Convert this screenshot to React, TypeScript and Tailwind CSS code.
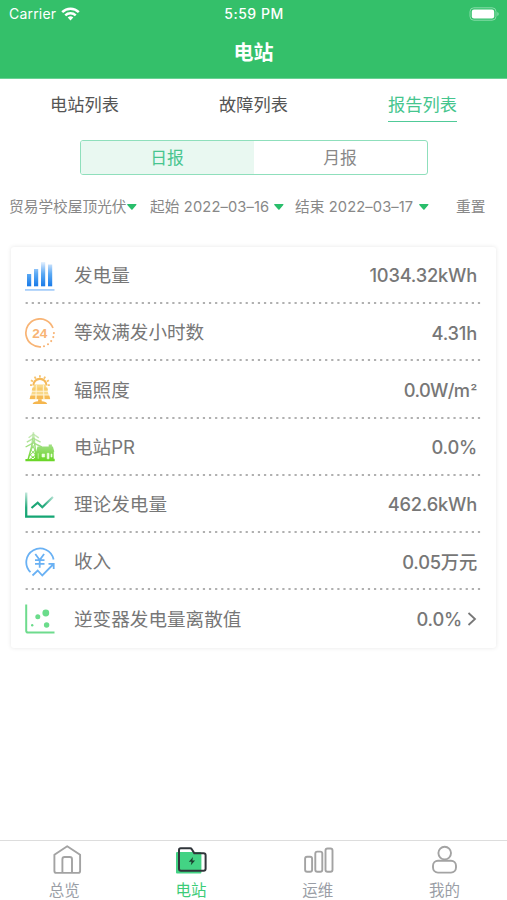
import { useState } from 'react';
import type { ReactNode } from 'react';
import clsx from 'clsx';

const OutputIcon = () => (
  <svg width="30" height="30" viewBox="0 0 30 30" fill="none">
    <defs>
      <linearGradient id="output" x1="0" y1="0" x2="0" y2="26" gradientUnits="userSpaceOnUse">
        <stop stopColor="#3f95f5" stopOpacity="0.05" />
        <stop offset="0.5" stopColor="#5aa9f3" />
        <stop offset="1" stopColor="#1477e8" />
      </linearGradient>
    </defs>
    <g fill="url(#output)">
      <rect x="2" y="13" width="4.2" height="12.3" />
      <rect x="9" y="8" width="4.2" height="17.3" />
      <rect x="16" y="1" width="4.2" height="24.3" />
      <rect x="23" y="3.5" width="4.2" height="21.8" />
    </g>
    <path d="M0 28.9h29.5" stroke="#a7cffa" strokeWidth="1.8" />
  </svg>
);

const HoursIcon = () => (
  <svg width="30" height="30" viewBox="0 0 30 30" fill="none">
    <path d="M28 10A14 14 0 1 0 16 28.8" stroke="#f8b475" strokeWidth="1.7" />
    <path
      d="M28.9 15v.1M28.3 19v.1M26.2 23v.1M23 26.2v.1M19 28.2v.1"
      stroke="#f8b475"
      strokeWidth="2.1"
      strokeLinecap="round"
    />
    <text
      x="14.7"
      y="19.8"
      textAnchor="middle"
      className="font-['Liberation_Sans',sans-serif] text-[13.6px] font-bold"
      fill="#f8b475"
    >
      24
    </text>
  </svg>
);

const IrradianceIcon = () => (
  <svg width="30" height="30" viewBox="0 0 30 30" fill="none">
    <path d="M8.3 10.5a6.6 6.6 0 0 1 13.2 0" stroke="#f5b95a" strokeWidth="2.2" />
    <path
      d="M14.9 2.6V.3M10.8 3.7L9.6 1.6M19 3.7l1.2-2.1M8 6.6L5.9 5.3M21.8 6.6l2.1-1.3M7 10.2H5M22.8 10.2h2"
      stroke="#f7c46e"
      strokeWidth="1.8"
    />
    <path d="M9.2 9.6h11.4l4.4 14.6H4.8z" fill="#f9d989" />
    <path d="M7.5 12.5h3.3l-.5 3H6.7zM12.6 12.5h4.6v3h-4.6zM19 12.5h3.3l.8 3h-3.6z" fill="#f8cc6d" />
    <path d="M5.5 20.5h4.8l-.4 3.6H4.6zM11.9 20.5h6v3.6h-6zM19.5 20.5h4.8l.9 3.6h-5.3z" fill="#f6bb55" />
    <path d="M6.5 16.3h17M5.4 19.9h19M11.4 10l-.5 14.2M18.4 10l.5 14.2" stroke="#fff8e5" strokeWidth=".8" />
    <path d="M13.1 24.2h3.6v2.1c2.8.2 5 1 5.5 2.6H7.6c.5-1.6 2.7-2.4 5.5-2.6z" fill="#f5b64e" />
  </svg>
);

const StationIcon = () => (
  <svg width="30" height="30" viewBox="0 0 30 30" fill="none">
    <defs>
      <linearGradient id="station" x1="0" y1="0" x2="0" y2="30" gradientUnits="userSpaceOnUse">
        <stop stopColor="#a9dd92" stopOpacity="0.5" />
        <stop offset="0.5" stopColor="#9ade78" />
        <stop offset="1" stopColor="#65d51f" />
      </linearGradient>
    </defs>
    <g stroke="url(#station)">
      <path d="M8.4 0L6.8 14 3 28M8.4 0L10 14l.8 14" strokeWidth="1.5" />
      <path d="M3.6 5.8l4.8-3.6 5.4 3.6M1.8 10.2l6.6-3.8 7.2 3.8M.6 15l7.8-4.2 8.4 4.2" strokeWidth="1.4" />
      <path d="M7.4 7l2.6 5-4.2 6 5 5-6 4.5M9.4 8l-2.8 5 3.6 5-5 5 5.6 4.5" strokeWidth="1" />
    </g>
    <path
      d="M12.5 14.4h11.2v-2h3.2v2h1l1.4 5.4h-.6v7h1v2.4H.4V27H10v-7.2h1z"
      fill="url(#station)"
    />
    <path d="M13.2 21.3v5.5M17 22h2.6v3H17zM22.2 21.3h1.8v5.5h-1.8zM26 22h1v3h-1z" fill="#efffe3" stroke="#efffe3" strokeWidth=".6" />
  </svg>
);

const TheoryIcon = () => (
  <svg width="30" height="30" viewBox="0 0 30 30" fill="none">
    <defs>
      <linearGradient id="theoryAxis" x1="0" y1="2" x2="0" y2="28" gradientUnits="userSpaceOnUse">
        <stop stopColor="#23aa7b" stopOpacity="0.25" />
        <stop offset="0.6" stopColor="#23aa7b" />
        <stop offset="1" stopColor="#12a572" />
      </linearGradient>
      <linearGradient id="theoryLine" x1="6" y1="0" x2="29" y2="0" gradientUnits="userSpaceOnUse">
        <stop stopColor="#14a371" />
        <stop offset="0.6" stopColor="#29ac80" />
        <stop offset="1" stopColor="#29ac80" stopOpacity="0.3" />
      </linearGradient>
    </defs>
    <path d="M1.2 2.5v24.2h28.3" stroke="url(#theoryAxis)" strokeWidth="2.3" />
    <path d="M6.5 18l6.2-5.3 4.6 4.5L28 7" stroke="url(#theoryLine)" strokeWidth="2.2" />
  </svg>
);

const IncomeIcon = () => (
  <svg width="30" height="30" viewBox="0 0 30 30" fill="none" stroke="#69b1f4" strokeWidth="1.8">
    <path d="M5.5 25.2A13.8 13.8 0 1 1 28.6 12.5" />
    <path d="M7.5 28.5l5.2-5 4.6 5L28.5 17M23.5 16.8h5.2V22" />
    <path d="M10.3 7l4.4 6 4.4-6M14.7 13v7.8M10 13.2h9.5M10 16.8h9.5" />
  </svg>
);

const ScatterIcon = () => (
  <svg width="30" height="30" viewBox="0 0 30 30" fill="none">
    <path d="M1.2.5v26.2q0 1.8 1.8 1.8h26.5" stroke="#6edb8d" strokeWidth="2" />
    <g fill="#6bdc8b">
      <circle cx="20.8" cy="9" r="3.4" />
      <circle cx="12.8" cy="12.8" r="2.5" />
      <circle cx="21.6" cy="21" r="2.7" />
      <circle cx="7.2" cy="21.2" r="1.2" />
    </g>
  </svg>
);

interface Metric {
  label: string;
  value: ReactNode;
  icon: ReactNode;
  link?: boolean;
}

const metrics: Metric[] = [
  { label: '发电量', value: '1034.32kWh', icon: <OutputIcon /> },
  { label: '等效满发小时数', value: '4.31h', icon: <HoursIcon /> },
  {
    label: '辐照度',
    value: (
      <>
        <span className="tracking-[-0.6px]">0.0W/m</span>
        <span className="ml-px text-[15px]">²</span>
      </>
    ),
    icon: <IrradianceIcon />,
  },
  { label: '电站PR', value: '0.0%', icon: <StationIcon /> },
  { label: '理论发电量', value: '462.6kWh', icon: <TheoryIcon /> },
  { label: '收入', value: '0.05万元', icon: <IncomeIcon /> },
  { label: '逆变器发电量离散值', value: '0.0%', icon: <ScatterIcon />, link: true },
];

const navItems = [
  {
    label: '总览',
    icon: (
      <svg width="32" height="32" viewBox="0 0 32 32" fill="none" stroke="#a3a3a3" strokeWidth="1.9" strokeLinejoin="round" className="ml-[5px]">
        <path d="M3.4 10.7L16.2 2.2l12.9 8.5v16.2a2 2 0 0 1-2 2H5.4a2 2 0 0 1-2-2z" />
        <path d="M11.4 28.5V15.2q0-2.2 2.2-2.2h5.2q2.2 0 2.2 2.2v13.3" />
      </svg>
    ),
  },
  {
    label: '电站',
    icon: (
      <svg width="32" height="32" viewBox="0 0 32 32" fill="none">
        <rect x="1" y="8" width="25.4" height="21.5" rx="1" fill="#43d384" />
        <path
          d="M5.7 4.3h9.5q1 0 1.6 1l2.5 4h9.3q2 0 2 2v13.5q0 2-2 2H6q-2 0-2-2V6q0-1.7 1.7-1.7z"
          stroke="#30353a"
          strokeWidth="2"
        />
        <path d="M18 13l-4.2 4.7h2.7l-.7 3.6 4.3-4.8h-2.7z" fill="#1c3f30" />
      </svg>
    ),
  },
  {
    label: '运维',
    icon: (
      <svg width="32" height="32" viewBox="0 0 32 32" fill="none" stroke="#a3a3a3" strokeWidth="1.9" className="ml-[1px]">
        <rect x="3.1" y="12.8" width="7" height="15" rx="2" />
        <rect x="13.3" y="7.6" width="7" height="20.2" rx="2" />
        <rect x="23.5" y="4.5" width="7" height="23.3" rx="2" />
      </svg>
    ),
  },
  {
    label: '我的',
    icon: (
      <svg width="32" height="32" viewBox="0 0 32 32" fill="none" stroke="#a3a3a3" strokeWidth="1.9">
        <circle cx="15.7" cy="9.1" r="6.3" />
        <rect x="4" y="16.7" width="23" height="11.9" rx="5" />
      </svg>
    ),
  },
];

const Caret = () => (
  <svg width="10" height="6" viewBox="0 0 10 6" className="shrink-0">
    <path d="M.7 0h8.2q1 .2.4 1L5.5 5.4q-.6.5-1.2 0L.3 1q-.5-.8.4-1z" fill="#29be6b" />
  </svg>
);

const StatusBar = () => (
  <div className="grid h-[27px] grid-cols-3 items-center pl-[9px] pr-2 text-[14px] text-white">
    <div className="flex items-center gap-[5px] tracking-[0.2px]">
      Carrier
      <svg width="19" height="14" viewBox="0 0 19 14" fill="none" stroke="white" strokeWidth="2.5">
        <path d="M1.2 5.2a11.7 11.7 0 0 1 16.6 0M4.3 8.4a7.4 7.4 0 0 1 10.4 0" />
        <path d="M6.7 10.6a4 4 0 0 1 5.6 0L9.5 13.5z" fill="white" stroke="none" />
      </svg>
    </div>
    <div className="text-center font-medium tracking-[0.5px]">5:59 PM</div>
    <svg width="30" height="14" viewBox="0 0 30 14" className="justify-self-end" fill="none">
      <rect x="1" y=".8" width="26" height="12.4" rx="3.8" stroke="#88dcaa" strokeWidth="1" />
      <rect x="2.8" y="2.5" width="22.4" height="9" rx="2.2" fill="white" />
      <path d="M28.3 5v4q1.4-.6 1.4-2t-1.4-2z" fill="#88dcaa" />
    </svg>
  </div>
);

const App = () => {
  const [tab, setTab] = useState('报告列表');
  const [period, setPeriod] = useState('日报');
  const [page, setPage] = useState('电站');

  return (
    <div className="flex h-[900px] w-[507px] flex-col overflow-hidden bg-white font-[Inter,'Noto_Sans_CJK_SC',sans-serif] text-[#777]">
      <header className="h-[79px] shrink-0 border-b border-[#6ad195] bg-[#34c06a]">
        <StatusBar />
        <h1 className="text-center text-[20px] leading-[52px] font-bold text-white">电站</h1>
      </header>

      <nav className="grid h-[43px] shrink-0 grid-cols-3 justify-items-center">
        {['电站列表', '故障列表', '报告列表'].map((name) => (
          <button
            key={name}
            onClick={() => setTab(name)}
            className={clsx(
              'border-b pt-[9px] text-[17.2px] leading-[33px]',
              tab === name ? 'border-[#50ca98] text-[#45c58e]' : 'border-transparent text-[#555]'
            )}
          >
            {name}
          </button>
        ))}
      </nav>

      <div className="mx-auto mt-[18px] grid h-[35px] w-[348px] shrink-0 grid-cols-2 overflow-hidden rounded-[3px] border border-[#8fdfbc] text-[16.8px]">
        {['日报', '月报'].map((name) => (
          <button
            key={name}
            onClick={() => setPeriod(name)}
            className={clsx('pt-[2px]', period === name ? 'bg-[#e9f8f1] text-[#48c58f]' : 'text-[#888]')}
          >
            {name}
          </button>
        ))}
      </div>

      <div className="mt-[21px] flex h-[22px] shrink-0 items-center pl-[9px] text-[14.7px] whitespace-nowrap text-[#888]">
        <div className="flex w-[141px] items-center">
          贸易学校屋顶光伏
          <Caret />
        </div>
        <div className="flex w-[145px] items-center gap-[5px]">
          <span className="tracking-[0.12px]">起始 2022–03–16</span>
          <Caret />
        </div>
        <div className="flex w-[161px] items-center gap-[6px]">
          <span className="tracking-[0.1px]">结束 2022–03–17</span>
          <Caret />
        </div>
        <button>重置</button>
      </div>

      <main className="mx-[11px] mt-[29px] h-[401px] shrink-0 rounded-[3px] bg-white pr-4 pl-3.5 shadow-[0_0_4px_rgba(0,0,0,0.10)]">
        {metrics.map((metric, i) => (
          <div key={metric.label} className="h-[57.25px]">
            <div className="flex h-[57px] items-center pr-[3px]">
              {metric.icon}
              <span className="ml-[19px] pt-px text-[18.6px]">{metric.label}</span>
              <span className="ml-auto pt-px text-[18.3px] font-medium tracking-[-0.2px]">
                {metric.value}
              </span>
              {metric.link && (
                <svg width="10" height="16" viewBox="0 0 10 16" fill="none" className="ml-[5px]">
                  <path d="M1.5 2l6.5 6-6.5 6" stroke="#777" strokeWidth="1.8" />
                </svg>
              )}
            </div>
            {i < metrics.length - 1 && (
              <svg width="456" height="2" viewBox="0 0 456 2" className="-mt-[2px] block">
                <path d="M.6 1h455" stroke="#b0b0b0" strokeWidth="2" strokeDasharray="2.2 3.912" />
              </svg>
            )}
          </div>
        ))}
      </main>

      <footer className="mt-auto grid h-[60px] shrink-0 grid-cols-4 border-t border-[#ddd]">
        {navItems.map((item) => (
          <button
            key={item.label}
            onClick={() => setPage(item.label)}
            className="flex flex-col items-center pt-[3px] pl-[2px]"
          >
            {item.icon}
            <span
              className={clsx(
                'mt-[3px] text-[15.5px] leading-[23px]',
                page === item.label ? 'text-[#3ccc78]' : 'text-[#9a9ea6]'
              )}
            >
              {item.label}
            </span>
          </button>
        ))}
      </footer>
    </div>
  );
};

export default App;
